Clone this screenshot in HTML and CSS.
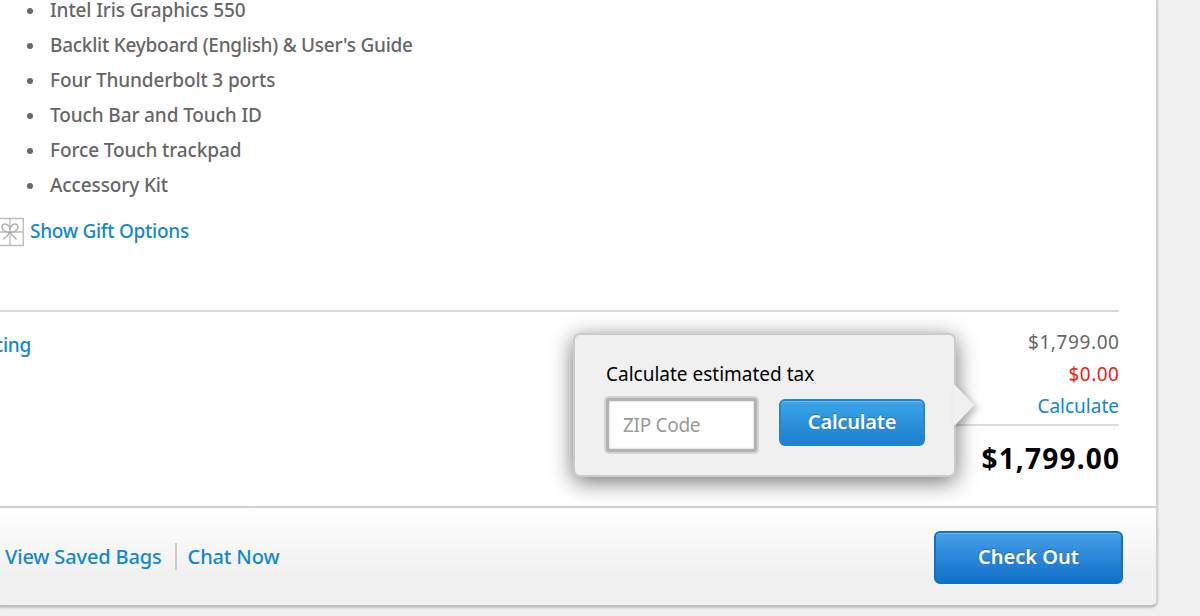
FILE: index.html
```html
<!DOCTYPE html>
<html lang="en">
<head>
    <meta charset="utf-8">
    <title>Bag</title>
    <link rel="stylesheet" href="styles.css">
</head>
<body>
    <div class="bag">
        <div class="bag-item">
            <ul class="specs">
                <li><span>Intel Iris Graphics 550</span></li>
                <li><span class="long">Backlit Keyboard (English) &amp; User's Guide</span></li>
                <li><span>Four Thunderbolt 3 ports</span></li>
                <li><span>Touch Bar and Touch ID</span></li>
                <li><span>Force Touch trackpad</span></li>
                <li><span>Accessory Kit</span></li>
            </ul>
            <div class="gift">
                <svg class="gift-icon" width="24" height="30" viewBox="0 0 24 30" fill="none" stroke="#bcbcbc" stroke-width="1.3">
                    <path d="M-2 1.5H23.3V28.5H-2M10 1.5V28.5M0 15H23"/>
                    <path d="M10 15.5C7 15.5 1.5 13.5 2 9.500C2.500 5.500 9.500 6 10 13C10.500 6 17.500 5.500 18 9.500C18.500 13.500 13 15.500 10 15.500L3.500 22.500M10 15.500L16.500 22.500" stroke="#b0b0b0" stroke-width="1.400"/>
                </svg>
                <a href="#">Show Gift Options</a>
            </div>
        </div>
        <div class="summary">
            <a href="#" class="financing">cing</a>
            <div class="totals">
                <div class="subtotal">$1,799.00</div>
                <div class="shipping">$0.00</div>
                <div class="tax">
                    <a href="#">Calculate</a>
                    <form class="popover">
                        <label for="zip">Calculate estimated tax</label>
                        <div class="popover-row">
                            <input id="zip" class="zip" type="text" placeholder="ZIP Code">
                            <button type="button" class="button button-calc">Calculate</button>
                        </div>
                        <svg class="arrow" width="22" height="42" viewBox="0 0 22 42">
                            <path d="M0 1H2L21.500 21L2 41H0Z" fill="#f0f0f0"/>
                        </svg>
                    </form>
                </div>
                <div class="total">$1,799.00</div>
            </div>
        </div>
        <div class="bag-footer">
            <a href="#" class="saved">View Saved Bags</a>
            <a href="#" class="chat">Chat Now</a>
            <button type="button" class="button button-checkout">Check Out</button>
        </div>
    </div>
</body>
</html>
```

FILE: styles.css
```css
* { box-sizing: border-box; }
html { overflow: hidden; }
body
{
    margin: 0;
    height: 616px;
    overflow: hidden;
    background-color: #f0f0f0;
    font-family: "Lucida Grande", "Noto Sans", sans-serif;
    font-size: 19px;
    color: #666;
}
a
{
    color: #1388cb;
    text-decoration: none;
    font-weight: 500;
}
.bag
{
    width: 1158px;
    height: 607px;
    display: flex;
    flex-direction: column;
    background-color: #fff;
    border-right: 2px solid #d2d2d2;
    border-bottom: 2px solid #bebebe;
    border-radius: 0 0 7px 0;
    box-shadow: 0 1px 2px rgba(0,0,0,.18);
}
.bag-item
{
    height: 312px;
    margin-right: 37px;
    border-bottom: 2px solid #d9d9d9;
}
.specs
{
    list-style: none;
    margin: -8px 0 0;
    padding: 0;
}
.specs li
{
    display: flex;
    align-items: center;
    height: 35px;
    padding-left: 27px;
    font-weight: 500;
    letter-spacing: -.12px;
}
.specs .long { letter-spacing: -.25px; }
.specs li:before
{
    content: "";
    width: 6px;
    height: 6px;
    margin: 2px 17px 0 0;
    border-radius: 50%;
    background-color: #666;
}
.gift
{
    display: flex;
    align-items: center;
    height: 30px;
    margin-top: 15px;
}
.gift a
{
    margin: -3px 0 0 6px;
    letter-spacing: -.28px;
}
.summary
{
    display: flex;
    justify-content: space-between;
    height: 194px;
    margin-right: 37px;
}
.financing
{
    margin: 19px 0 0 -6px;
    line-height: 28px;
    letter-spacing: -.3px;
}
.totals
{
    width: 200px;
    padding-top: 14px;
    text-align: right;
    line-height: 32px;
}
.subtotal
{
    letter-spacing: .6px;
    margin-right: -.6px;
}
.shipping
{
    color: #f21c1c;
    letter-spacing: .5px;
    margin-right: -.5px;
}
.tax
{
    position: relative;
    height: 36px;
    border-bottom: 2px solid #dcdcdc;
}
.tax a { font-weight: 400; }
.total
{
    padding-top: 13px;
    margin-right: -1.2px;
    line-height: 38px;
    font-size: 28px;
    font-weight: 700;
    letter-spacing: 1.2px;
    color: #000;
}
/* tax estimate bubble, opens to the left of the link */
.popover
{
    position: absolute;
    right: 163px;
    top: -57px;
    width: 383px;
    height: 144px;
    padding: 25px 30px 24px 31px;
    text-align: left;
    background-color: #f0f0f0;
    border: 2px solid #cbcbcb;
    border-radius: 7px;
    box-shadow: 0 5px 22px rgba(0,0,0,.55);
}
.popover label
{
    display: block;
    line-height: 28px;
    color: #000;
}
.popover-row
{
    display: flex;
    justify-content: space-between;
    margin: 10px -1px 0 0;
}
.zip
{
    width: 151px;
    height: 54px;
    padding: 0 14px;
    font: inherit;
    letter-spacing: -.3px;
    background-color: #fff;
    border: 3px solid #b3b3b6;
    border-radius: 3px;
    outline: none;
    box-shadow: 0 0 0 2px #d4d4d5, inset 0 0 2px #aaa;
}
.zip::placeholder { color: #999; opacity: 1; }
.arrow
{
    position: absolute;
    left: 378px;
    top: 49px;
    filter: drop-shadow(4px 3px 3px rgba(0,0,0,.2));
}
.button
{
    font-family: inherit;
    color: #fff;
    padding: 0;
    border-radius: 6px;
    text-shadow: 0 -1px 1px rgba(0,0,0,.25);
}
.button-calc
{
    width: 146px;
    height: 47px;
    margin-top: 1px;
    padding-bottom: 2px;
    font-size: 20px;
    font-weight: 600;
    letter-spacing: -.2px;
    border: 2px solid #2086d3;
    background: linear-gradient(#3ba5e8, #1d7fd0);
    box-shadow: inset 0 1px 0 rgba(255,255,255,.25);
}
.button-checkout
{
    width: 189px;
    height: 53px;
    margin: 1px 33px 0 auto;
    padding-bottom: 2px;
    font-size: 20px;
    font-weight: 600;
    border: 2px solid #1470c0;
    background: linear-gradient(#459fe8, #1170c8);
    box-shadow: inset 0 1px 0 rgba(255,255,255,.25);
}
.bag-footer
{
    display: flex;
    align-items: center;
    height: 99px;
    padding-left: 5px;
    font-size: 20px;
    letter-spacing: -.15px;
    border-top: 2px solid #d2d2d2;
    border-radius: 0 0 6px 0;
    background: linear-gradient(#fff, #f0f0f0 70%);
}
.chat
{
    margin-left: 13px;
    padding-left: 11px;
    border-left: 2px solid #ccc;
}
```
